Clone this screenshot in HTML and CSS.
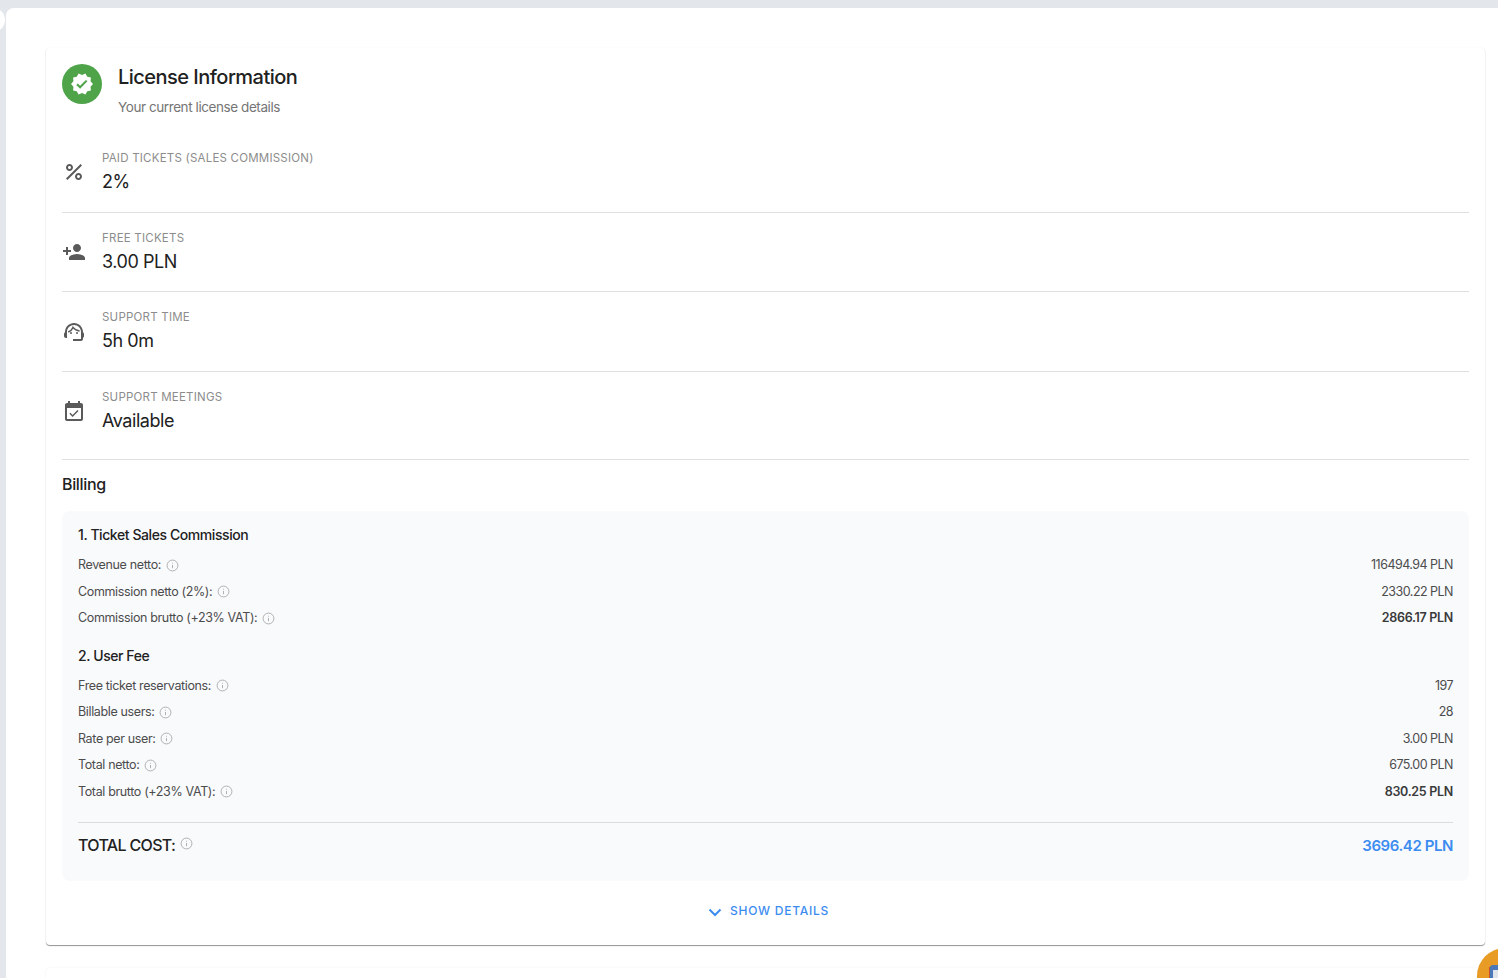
FILE: index.html
```html
<!DOCTYPE html>
<html lang="en">
<head>
<meta charset="utf-8">
<title>License Information</title>
<link rel="stylesheet" href="styles.css">
</head>
<body>
<div class="toggle"></div>
<main class="panel">
  <section class="card">
    <header class="head">
      <div class="badge">
        <svg viewBox="0 0 24 24" width="24" height="24"><path fill="#fff" d="M23 12l-2.44-2.79.34-3.69-3.61-.82-1.89-3.2L12 2.96 8.6 1.5 6.71 4.69 3.1 5.5l.34 3.7L1 12l2.44 2.79-.34 3.7 3.61.82L8.6 22.5l3.4-1.47 3.4 1.46 1.89-3.19 3.61-.82-.34-3.69L23 12zm-12.91 4.72-3.8-3.81 1.48-1.48 2.32 2.33 5.85-5.87 1.48 1.48-7.33 7.35z"/></svg>
      </div>
      <div class="head-text">
        <h1 class="title">License Information</h1>
        <p class="subtitle">Your current license details</p>
      </div>
    </header>

    <div class="row row-first">
      <svg class="row-icon" viewBox="0 0 24 24"><path d="M7.5 11C9.43 11 11 9.43 11 7.5S9.43 4 7.5 4 4 5.57 4 7.5 5.57 11 7.5 11zm0-5C8.33 6 9 6.67 9 7.5S8.33 9 7.5 9 6 8.33 6 7.5 6.67 6 7.5 6zM4.0 18.6 18.6 4 20 5.4 5.4 20zM16.5 13c-1.93 0-3.5 1.57-3.5 3.5s1.57 3.5 3.5 3.5 3.5-1.57 3.5-3.5-1.57-3.5-3.5-3.5zm0 5c-.83 0-1.5-.67-1.5-1.5s.67-1.5 1.5-1.5 1.5.67 1.5 1.5-.67 1.5-1.5 1.5z"/></svg>
      <div><div class="label">PAID TICKETS (SALES COMMISSION)</div><div class="value">2%</div></div>
    </div>
    <div class="row">
      <svg class="row-icon" viewBox="0 0 24 24"><path d="M15 12c2.21 0 4-1.79 4-4s-1.79-4-4-4-4 1.79-4 4 1.79 4 4 4zm-9-2V7H4v3H1v2h3v3h2v-3h3v-2H6zm9 4c-2.67 0-8 1.34-8 4v2h16v-2c0-2.66-5.33-4-8-4z"/></svg>
      <div><div class="label">FREE TICKETS</div><div class="value">3.00 PLN</div></div>
    </div>
    <div class="row">
      <svg class="row-icon" viewBox="0 0 24 24"><path d="M21 12.22C21 6.73 16.74 3 12 3c-4.69 0-9 3.65-9 9.28-.6.34-1 .98-1 1.72v2c0 1.1.9 2 2 2h1v-6.1c0-3.87 3.13-7 7-7s7 3.13 7 7V19h-8v2h8c1.1 0 2-.9 2-2v-1.22c.59-.31 1-.92 1-1.64v-2.3c0-.7-.41-1.31-1-1.62z"/><circle cx="9" cy="13" r="1"/><circle cx="15" cy="13" r="1"/><path class="icon-hair" d="M6.2 12C8.4 11 10.300 9.200 11 7.400c1.500 2 3.800 3.400 6.600 3.600"/></svg>
      <div><div class="label">SUPPORT TIME</div><div class="value">5h 0m</div></div>
    </div>
    <div class="row row-last">
      <svg class="row-icon" viewBox="0 0 24 24"><path d="M16.53 11.06 15.47 10l-4.88 4.88-2.12-2.12-1.06 1.06L10.59 17l5.94-5.94zM19 3h-1V1h-2v2H8V1H6v2H5c-1.11 0-1.99.9-1.99 2L3 19c0 1.1.89 2 2 2h14c1.1 0 2-.9 2-2V5c0-1.1-.9-2-2-2zm0 16H5V8h14v11z"/></svg>
      <div><div class="label">SUPPORT MEETINGS</div><div class="value">Available</div></div>
    </div>

    <h2 class="billing-title">Billing</h2>

    <div class="billing">
      <h3 class="section-title">1. Ticket Sales Commission</h3>
      <div class="line"><span class="line-name">Revenue netto:<svg class="info" viewBox="0 0 24 24"><circle cx="12" cy="12" r="10"/><path d="M12 11v6M12 7v1.6"/></svg></span><span class="amount">116494.94 PLN</span></div>
      <div class="line"><span class="line-name">Commission netto (2%):<svg class="info" viewBox="0 0 24 24"><circle cx="12" cy="12" r="10"/><path d="M12 11v6M12 7v1.6"/></svg></span><span class="amount">2330.22 PLN</span></div>
      <div class="line"><span class="line-name">Commission brutto (+23% VAT):<svg class="info" viewBox="0 0 24 24"><circle cx="12" cy="12" r="10"/><path d="M12 11v6M12 7v1.6"/></svg></span><span class="amount strong">2866.17 PLN</span></div>

      <h3 class="section-title section-second">2. User Fee</h3>
      <div class="line"><span class="line-name">Free ticket reservations:<svg class="info" viewBox="0 0 24 24"><circle cx="12" cy="12" r="10"/><path d="M12 11v6M12 7v1.6"/></svg></span><span class="amount">197</span></div>
      <div class="line"><span class="line-name">Billable users:<svg class="info" viewBox="0 0 24 24"><circle cx="12" cy="12" r="10"/><path d="M12 11v6M12 7v1.6"/></svg></span><span class="amount">28</span></div>
      <div class="line"><span class="line-name">Rate per user:<svg class="info" viewBox="0 0 24 24"><circle cx="12" cy="12" r="10"/><path d="M12 11v6M12 7v1.6"/></svg></span><span class="amount">3.00 PLN</span></div>
      <div class="line"><span class="line-name">Total netto:<svg class="info" viewBox="0 0 24 24"><circle cx="12" cy="12" r="10"/><path d="M12 11v6M12 7v1.6"/></svg></span><span class="amount">675.00 PLN</span></div>
      <div class="line"><span class="line-name">Total brutto (+23% VAT):<svg class="info" viewBox="0 0 24 24"><circle cx="12" cy="12" r="10"/><path d="M12 11v6M12 7v1.6"/></svg></span><span class="amount strong">830.25 PLN</span></div>

      <div class="total">
        <span class="total-name">TOTAL COST:<svg class="info info-total" viewBox="0 0 24 24"><circle cx="12" cy="12" r="10"/><path d="M12 11v6M12 7v1.6"/></svg></span>
        <span class="total-value">3696.42 PLN</span>
      </div>
    </div>

    <div class="actions">
      <div class="show-details">
        <svg class="chevron" viewBox="0 0 14 9"><path d="M1.5 1.5 7 7l5.5-5.5"/></svg>
        <span>SHOW DETAILS</span>
      </div>
    </div>
  </section>
  <section class="card card-next"></section>
</main>
<div class="fab"><svg viewBox="0 0 24 24" width="24" height="24"><rect x="0" y="2" width="8" height="22" fill="#c9502e"/><rect x="1" y="0" width="22" height="24" rx="3" fill="#4a78b8"/><rect x="4" y="5" width="16" height="19" fill="#dfe4ea"/></svg></div>
</body>
</html>
```

FILE: styles.css
```css
* { box-sizing: border-box; }
html, body { margin: 0; height: 100%; overflow: hidden; }
body {
  background: #e3e6ea;
  font-family: Inter, "Noto Sans", sans-serif;
  color: #212121;
  padding: 8px 0 0 6px;
  position: relative;
}
.toggle {
  position: absolute;
  left: -19px;
  top: 8px;
  width: 24px;
  height: 24px;
  border-radius: 50%;
  background: #fff;
}
.panel {
  background: #fff;
  border-radius: 8px 0 0 0;
  height: 100%;
  padding: 40px 13px 0 40px;
}
.card {
  background: #fff;
  border-radius: 4px;
  padding: 16px 16px 0;
  height: 897px;
  box-shadow: 0 1px 1px rgba(0,0,0,.42), 0 0 2px rgba(0,0,0,.06);
}
.card-next {
  height: 40px;
  margin-top: 23px;
  box-shadow: 0 0 2px rgba(0,0,0,.08);
}
.head { display: flex; height: 69.5px; }
.badge {
  width: 40px;
  height: 40px;
  border-radius: 50%;
  background: #4fa44a;
  display: flex;
  align-items: center;
  justify-content: center;
  margin-right: 16px;
}
.title { margin: 0; font-size: 20px; line-height: 26px; font-weight: 500; letter-spacing: -.52px; color: #212121; }
.subtitle { margin: 5px 0 0; font-size: 13.5px; line-height: 24px; letter-spacing: -.42px; color: #757575; }
.row {
  display: flex;
  align-items: center;
  height: 79.5px;
  padding-top: 1px;
  border-bottom: 1px solid #e0e0e0;
}
.row-first { height: 79px; padding-top: 0; }
.row-first .row-icon { margin-top: -1px; }
.row-last { height: 88px; padding-bottom: 8px; }
.row-icon { width: 24px; height: 24px; fill: #5a5a5a; margin-right: 16px; flex: none; }
.icon-hair { fill: none; stroke: #5a5a5a; stroke-width: 1.5; }
.label { font-size: 11.5px; line-height: 16px; letter-spacing: .22px; color: #8c8c8c; }
.value { font-size: 18px; line-height: 26px; margin-top: 3.25px; color: #212121; letter-spacing: -.45px; }
.billing-title { margin: 0; padding-top: 12.5px; font-size: 16px; line-height: 24px; font-weight: 500; letter-spacing: -.35px; }
.billing {
  margin-top: 15px;
  background: #f9fafc;
  border-radius: 8px;
  padding: 14px 16px 0;
  height: 370px;
}
.section-title { margin: 0 0 6.3px; font-size: 14px; line-height: 20px; font-weight: 500; letter-spacing: -.42px; color: #212121; }
.section-second { margin: 15.3px 0 5.7px; }
.line {
  display: flex;
  justify-content: space-between;
  align-items: center;
  height: 26.5px;
  font-size: 12.5px;
  letter-spacing: -.36px;
  color: #4c4c4c;
}
.line-name { display: flex; align-items: center; }
.amount { letter-spacing: -.52px; }
.strong { font-weight: 600; color: #3a3a3a; letter-spacing: -.3px; }
.info {
  width: 13px;
  height: 13px;
  margin-left: 4.5px;
  fill: none;
  stroke: #aaaaaa;
  stroke-width: 1.7;
  flex: none;
  margin-top: 1px;
}
.total {
  margin-top: 17.5px;
  border-top: 1px solid #dcdcdc;
  padding-top: 10px;
  display: flex;
  justify-content: space-between;
  align-items: center;
  font-size: 16px;
  line-height: 24px;
  font-weight: 500;
}
.total-name { display: flex; align-items: center; letter-spacing: -.66px; }
.info-total { margin-top: -3px; }
.total-value { color: #3c8cf0; font-size: 15px; letter-spacing: -.42px; font-weight: 600; padding-top: 1px; }
.actions { display: flex; justify-content: center; padding: 20px 0 0 6px; }
.show-details {
  display: flex;
  align-items: center;
  font-size: 12px;
  line-height: 20px;
  font-weight: 500;
  letter-spacing: .75px;
  color: #3c8cf0;
}
.chevron { width: 14px; height: 9px; fill: none; stroke: #3c8cf0; stroke-width: 2; margin-right: 8px; margin-top: 3px; }
.fab {
  position: absolute;
  left: 1477px;
  top: 948px;
  width: 56px;
  height: 56px;
  border-radius: 50%;
  background: #e89c25;
  padding: 17px 0 0 12px;
}
```
